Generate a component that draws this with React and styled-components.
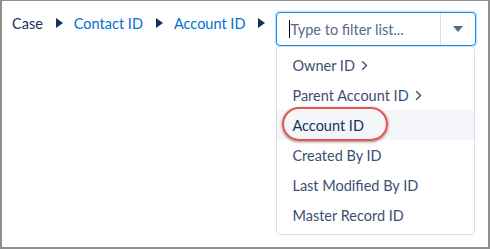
import React from 'react';
import styled, { createGlobalStyle } from 'styled-components';

const Global = createGlobalStyle`
  html, body { margin: 0; padding: 0; background: #fff; }
  body { font-family: Lato, "Open Sans", "Liberation Sans", sans-serif; }
`;

const Frame = styled.div`
  box-sizing: border-box;
  width: 490px;
  height: 249px;
  border: 2px solid #8f8f8f;
  border-top-width: 1px;
  display: flex;
  align-items: flex-start;
  padding: 11px 12px 0 10px;
  background: #fff;
`;

const Crumbs = styled.div`
  display: flex;
  align-items: center;
  height: 20px;
  margin-top: 1px;
  font-size: 14.5px;
`;

const Crumb = styled.span`
  color: ${p => (p.$link ? '#0070d2' : '#16325c')};
  white-space: nowrap;
`;

const Sep = styled.span`
  display: inline-block;
  width: 0;
  height: 0;
  margin: 0 11px 0 13px;
  border-top: 5px solid transparent;
  border-bottom: 5px solid transparent;
  border-left: 7px solid #16325c;
`;

const Combo = styled.div`
  display: flex;
  flex-direction: column;
  width: 200px;
`;

const InputBox = styled.div`
  box-sizing: border-box;
  height: 34px;
  display: flex;
  border: 1px solid #1589ee;
  border-radius: 4px;
  box-shadow: 0 0 2px #1589ee;
`;

const Field = styled.div`
  flex: 1;
  display: flex;
  align-items: center;
  padding-left: 12px;
  font-size: 14.5px;
  color: #54698d;
  white-space: nowrap;
`;

const Caret = styled.span`
  display: inline-block;
  width: 1px;
  height: 18px;
  background: #000;
`;

const Toggle = styled.div`
  width: 34px;
  border-left: 1px solid #d8dde6;
  display: flex;
  align-items: center;
  justify-content: center;
`;

const Menu = styled.ul`
  box-sizing: border-box;
  list-style: none;
  margin: 0 1px 0 0;
  padding: 3px 0 4px;
  border: 1px solid #d8dde6;
  border-radius: 4px;
  background: #fff;
`;

const Item = styled.li`
  position: relative;
  height: 30px;
  display: flex;
  align-items: center;
  padding-left: 15px;
  font-size: 14.5px;
  color: #3c4f70;
  background: ${p => (p.$active ? '#f4f6f9' : 'transparent')};
  ${p => p.$active && 'color: #16325c;'}
`;

const Chevron = styled.svg`
  margin-left: 6px;
`;

const Ring = styled.span`
  position: absolute;
  left: 5px;
  top: -3px;
  width: 106px;
  height: 34px;
  box-sizing: border-box;
  border: 2px solid #e4554d;
  border-radius: 17px;
  box-shadow: 0 1px 3px rgba(0, 0, 0, 0.45), inset 0 0 1px rgba(0, 0, 0, 0.2);
`;

const Arrow = () => (
  <Chevron width="7" height="11" viewBox="0 0 7 11">
    <path d="M1.2 1.2 L5.5 5.5 L1.2 9.8" fill="none" stroke="#3c4f70" strokeWidth="1.4" />
  </Chevron>
);

const items = [
  { label: 'Owner ID', more: true },
  { label: 'Parent Account ID', more: true },
  { label: 'Account ID', active: true },
  { label: 'Created By ID' },
  { label: 'Last Modified By ID' },
  { label: 'Master Record ID' },
];

export default function App() {
  return (
    <>
      <Global />
      <Frame>
        <Crumbs>
          <Crumb>Case</Crumb>
          <Sep />
          <Crumb $link>Contact ID</Crumb>
          <Sep />
          <Crumb $link>Account ID</Crumb>
          <Sep />
        </Crumbs>
        <Combo>
          <InputBox>
            <Field>
              <Caret />
              Type to filter list...
            </Field>
            <Toggle>
              <svg width="10" height="6" viewBox="0 0 10 6">
                <path d="M0 0 H10 L5 6 Z" fill="#54698d" />
              </svg>
            </Toggle>
          </InputBox>
          <Menu>
            {items.map(it => (
              <Item key={it.label} $active={it.active}>
                {it.label}
                {it.more && <Arrow />}
                {it.active && <Ring />}
              </Item>
            ))}
          </Menu>
        </Combo>
      </Frame>
    </>
  );
}
